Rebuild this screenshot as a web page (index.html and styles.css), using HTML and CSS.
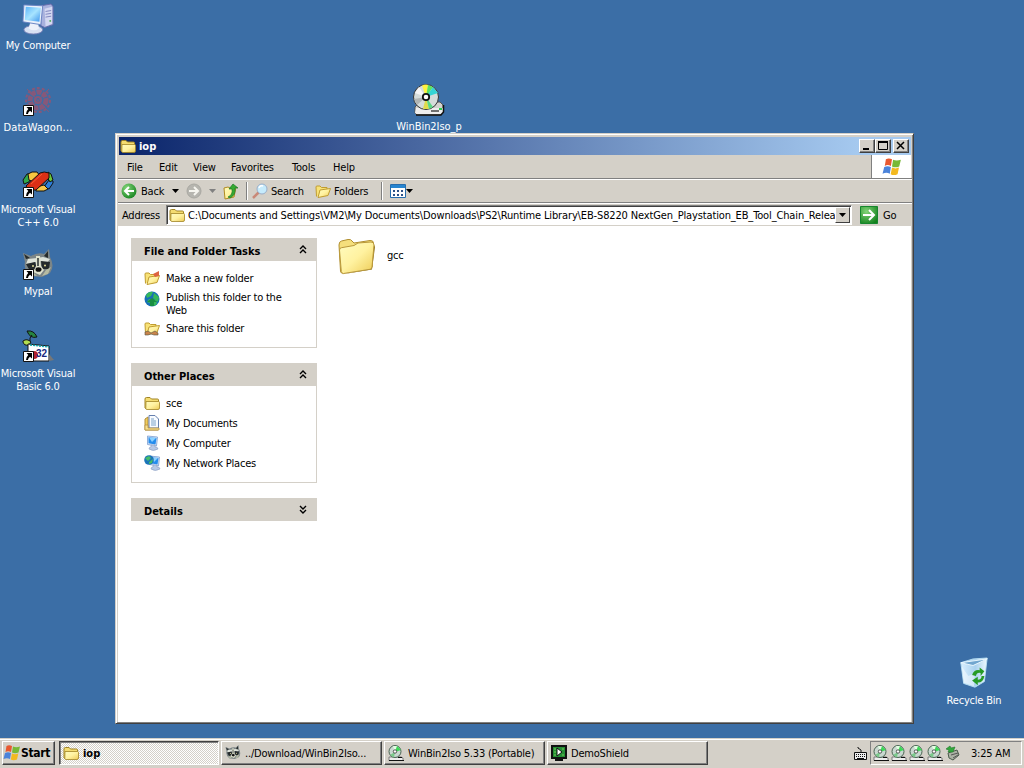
FILE: index.html
```
<!DOCTYPE html>
<html lang="en">
<head>
<meta charset="utf-8">
<title>iop</title>
<link rel="stylesheet" href="styles.css">
</head>
<body>
<svg class="defs" width="0" height="0">
  <defs>
    <linearGradient id="gold" x1="0" y1="0" x2="1" y2="1"><stop offset="0" stop-color="#fffcc0"/><stop offset=".5" stop-color="#fff2a0"/><stop offset="1" stop-color="#edcb55"/></linearGradient>
    <linearGradient id="screen" x1="0" y1="0" x2="1" y2="1"><stop offset="0" stop-color="#5db4fa"/><stop offset=".5" stop-color="#a7e4ff"/><stop offset="1" stop-color="#3d94ec"/></linearGradient>
    <radialGradient id="green" cx=".35" cy=".3" r=".8"><stop offset="0" stop-color="#83d578"/><stop offset="1" stop-color="#12811c"/></radialGradient>
    <linearGradient id="glass" x1="0" y1="0" x2="1" y2="0"><stop offset="0" stop-color="#d9efff"/><stop offset=".55" stop-color="#a9d1ee"/><stop offset="1" stop-color="#eff9fe"/></linearGradient>
  </defs>
  <symbol id="folder" viewBox="0 0 16 16">
    <path d="M1 13V4Q1 2.500 2.500 2.500H6L7.500 4H13.500Q14.500 4 14.500 5V13.500H1.500Z" fill="#f4dc70" stroke="#a18425"/>
    <path d="M2 6.500H14.500Q15.500 6.500 15.500 7.500V13Q15.500 14.500 14 14.500H3Q1.800 14.500 1.800 13.500Z" fill="url(#gold)" stroke="#a18425" stroke-width=".8"/>
  </symbol>
  <symbol id="open-folder" viewBox="0 0 16 16">
    <path d="M1.500 13.500 1 4Q1 3 2 3H5L6.500 4.500H12V7" fill="#f8e277" stroke="#c09c30"/>
    <path d="M5 7 15.500 5.500 13 12.500 3 14.500Z" fill="url(#gold)" stroke="#c09c30"/>
  </symbol>
  <symbol id="big-folder" viewBox="0 0 38 38">
    <path d="M3 36.500 34 31.500 37 9 35 4 31 31Z" fill="#8f701c"/>
    <path d="M1 7Q1 3.500 3.500 3L10 1.500Q13 1 14 3L16 5 32 2.500Q35.500 2 35.500 5.500L34 29 5 35Q2.500 35.500 2.500 33Z" fill="#f5df7c" stroke="#b08e2f"/>
    <path d="M1.500 12Q1.500 10 3.500 9.700L16 7.500 20 5 33 4Q36 4 36 7L34 29Q34 31 32 31.300L5.500 35.500Q3.500 35.500 3.300 33.500Z" fill="url(#gold)" stroke="#b9983a"/>
  </symbol>
  <symbol id="flag" viewBox="0 0 18 18">
    <path d="M3.500 2Q6 .500 9 2L8 8Q5 6.500 2.500 8Z" fill="#e8582f"/><path d="M10 2.500Q13 4 17 2.500L15.500 8.500Q12 10 9 8.500Z" fill="#77b936"/>
    <path d="M2 9Q5 7.500 8 9L7 15Q4 13.500.500 15Z" fill="#4b83da"/><path d="M9 9.500Q12 11 15.300 9.500L14 15.500Q10.500 17 7.800 15.500Z" fill="#f3b91f"/>
  </symbol>
  <symbol id="disc" viewBox="0 0 32 32">
    <path d="M2 23 7 18H27L30 21V29L27 31H4L2 29Z" fill="#d3d3cf" stroke="#555"/><path d="M3 24H30V29L27 30H4L2 29Z" fill="#eee"/><path d="M3 31H28L30.500 28V21" fill="none" stroke="#111" stroke-width="1.500"/><path d="M18 27H26" stroke="#444" stroke-width="1.500"/><path d="M26 24h3v2h-3z" fill="#27cd50"/>
    <circle cx="13" cy="13" r="12.500" fill="#d5dcda" stroke="#333"/>
    <path d="M13 13 9 1.500Q13 0 15 1Z" fill="#fff23e"/><path d="M13 13 15 1 20 3Z" fill="#5de35d"/><path d="M13 13 20 3 25 9Z" fill="#35d4d4"/><path d="M13 13 1 15 4 21Z" fill="#b0b5b4"/><path d="M13 13 10 25 16 25Z" fill="#e0db4c"/><path d="M13 13 16 25 20 23Z" fill="#59d985"/><path d="M13 13 2 9 6 3Z" fill="#f5f5f5"/>
    <circle cx="13" cy="13" r="3.200" fill="#fff" stroke="#111" stroke-width="1.800"/>
  </symbol>
  <symbol id="small-disc" viewBox="0 0 16 16">
    <path d="M1 12H13L15 13V15.500H1Z" fill="#eee" stroke="#666" stroke-width=".8"/><circle cx="7" cy="6.500" r="6" fill="#c9d8d0" stroke="#496452"/>
    <path d="M7 7 5 1H9Z" fill="#e3ffe3"/><path d="M7 7 9 1 13 5Z" fill="#3dd957"/><path d="M7 7 2 10 6 12.500Z" fill="#79c98a"/><circle cx="7" cy="6.500" r="1.700" fill="#fff" stroke="#333" stroke-width=".8"/><path d="M1 15.500H16M10 12.500H14" stroke="#111"/>
  </symbol>
  <symbol id="computer" viewBox="0 0 34 34">
    <path d="M20 3 31 1 33 4V23L24 26 20 24Z" fill="#a9b1dd" stroke="#656aaa"/><path d="M24 6 32 4V22L25 25Z" fill="#d4d8f1"/><path d="M25 9 31 8M25 12 31 11M25 15 31 14" stroke="#7c82bd"/><circle cx="30" cy="19" r="1" fill="#4eae55"/>
    <ellipse cx="12" cy="28.500" rx="10" ry="4.500" fill="#d8e1f3" stroke="#7680b6"/><path d="M9 20H17L18 27Q13 31 7 27Z" fill="#eef1fa"/>
    <path d="M2 2 22 3 20 23 1 20Z" fill="#e9f0fb" stroke="#6681c2"/><path d="M4 4 20 5 18.500 20 3 18Z" fill="url(#screen)"/>
  </symbol>
  <symbol id="pc" viewBox="0 0 16 16">
    <path d="M3.500 1 13.500 2 12.500 11 3.500 9.500Z" fill="#d7e5f7" stroke="#7c9ed2" stroke-width=".8"/><path d="M4.500 2.200 12.500 3 11.500 9.500 4.500 8.300Z" fill="#258ced"/><path d="M5 2.500 12 3 8 7Z" fill="#8bd1ff"/><path d="M7 10H11V12Q14 12 14 14 9 17 5 14 5 12 7 12Z" fill="#b8c9e6" stroke="#8a9cc0" stroke-width=".6"/>
  </symbol>
  <symbol id="shortcut" viewBox="0 0 11 11">
    <path d="M.5.500H10.500V10.500H.5Z" fill="#fff" stroke="#111"/><path d="M3.500 2H9V7.500L7 5.800Q5 7 5 9H3Q3 6 5.300 4Z" fill="#000"/>
  </symbol>
  <symbol id="raccoon" viewBox="0 0 32 32">
    <path d="M1 4 9 7Q16 3 22 5L27 0 28 8Q33 17 28 24L20 28 9 27Q1 20 3 13Z" fill="#7c8587"/><path d="M2 5 8 9 4 10ZM26 2 26 9 22 7Z" fill="#262b2b"/><path d="M6 10 15 9 21 8 28 10 25 14 18 12 10 14 4 15Z" fill="#dde2d9"/><path d="M4 15 13 13 15 20 8 22ZM19 12 28 13 27 20 20 20Z" fill="#242a2c"/><path d="M14 7H18L19 17 22 21 18 26 11 23 14 17Z" fill="#dfe2cd"/><path d="M15 9H17V17H15Z" fill="#555b58"/><circle cx="11" cy="17" r="1" fill="#e2dd9a"/><circle cx="23" cy="16.500" r="1" fill="#e2dd9a"/><ellipse cx="16.500" cy="20.500" rx="3" ry="2.300" fill="#111"/><path d="M24 21 29 18 26 25 20 27ZM6 22 11 23 15 27 9 26Z" fill="#b6bba2"/>
  </symbol>
</svg>

<main class="desktop">
  <div class="shortcut my-computer"><svg class="icon" viewBox="0 0 34 34"><use href="#computer"/></svg><span>My Computer</span></div>
  <div class="shortcut datawagon"><svg class="icon" viewBox="0 0 32 32"><g fill="none" stroke="#a65068" opacity=".7"><circle cx="16" cy="15" r="12" stroke-width="2" stroke-dasharray="3 2"/><circle cx="16" cy="15" r="8" stroke-width="5" stroke-dasharray="5 1"/><path d="M5 4 27 27M27 4 6 26" stroke-width="1"/><circle cx="16" cy="15" r="3" stroke-width="2"/></g><use href="#shortcut" x="1" y="20" width="11" height="11"/></svg><span>DataWagon...</span></div>
  <div class="shortcut visual-c"><svg class="icon" viewBox="0 0 32 32"><path d="M1 13 5 7 10 6 7 15 2 17Z" fill="#30a84a" stroke="#111"/><path d="M6 7 10 5H15L18 9 12 15 7 13Z" fill="#f8c740" stroke="#111"/><path d="M22 20 27 13 31 14V16L27 22Z" fill="#2b7edc" stroke="#111"/><path d="M26 5 29 7 31 13 28 15 25 10Z" fill="#68c639" stroke="#111"/><path d="M14 20 22 18 26 22 22 24H14Z" fill="#f8c849" stroke="#111"/><path d="M4 19 18 6Q22 4 27 6V11L14 23H7Z" fill="#db3016" stroke="#111"/><path d="M9 17 20 7" stroke="#f65d37"/><use href="#shortcut" x="1" y="20" width="11" height="11"/></svg><span>Microsoft Visual<br>C++ 6.0</span></div>
  <div class="shortcut mypal"><svg class="icon" viewBox="0 0 32 32"><use href="#raccoon"/><use href="#shortcut" x="1" y="20" width="11" height="11"/></svg><span>Mypal</span></div>
  <div class="shortcut visual-basic"><svg class="icon" viewBox="0 0 32 32"><path d="M5 0Q12 -1 15 6 8 8 5 0Z" fill="#268340" stroke="#111"/><path d="M1 10Q5 7 9 11L7 14Q2 15 1 11Z" fill="#b3dd50" stroke="#111"/><path d="M8 10Q7 7 10 4" fill="none" stroke="#111"/><path d="M6 13 27 15V30H6Z" fill="#fff" stroke="#111"/><path d="M8 14 27 16" stroke="#12a7ae" stroke-width="1.500" stroke-dasharray="2 1"/><path d="M27 23 32 29 27 30Z" fill="#777"/><circle cx="12" cy="24" r="4" fill="#b3212d"/><text x="14" y="26" class="vb-number">32</text><use href="#shortcut" x="1" y="20" width="11" height="11"/></svg><span>Microsoft Visual<br>Basic 6.0</span></div>
  <div class="shortcut winbin"><svg class="icon" viewBox="0 0 32 32"><use href="#disc"/></svg><span>WinBin2Iso_p</span></div>
  <div class="shortcut recycle"><svg class="icon" viewBox="0 0 34 34"><path d="M3 5 16 1 31 0 28 25 18 31 6 27Z" fill="url(#glass)" stroke="#b9dff2"/><path d="M3 5 16 8 31 1 17 3Z" fill="#71a6cf" stroke="#ecf9ff"/><path d="M4 9 11 19 18 16 17 30 6 26Z" fill="#fff" opacity=".45"/><path d="M15 18Q17 12 23 13V10L28 14 24 19V16Q20 15 19 19ZM28 19Q27 26 21 26V29L15 24 21 20V23Q25 23 25 19Z" fill="#279b25"/></svg><span>Recycle Bin</span></div>

  <section class="window">
    <header class="titlebar"><svg class="i16"><use href="#folder"/></svg><b>iop</b><div class="window-buttons"><i class="caption"><svg viewBox="0 0 14 12"><path d="M3 9H9" stroke="#000" stroke-width="2"/></svg></i><i class="caption"><svg viewBox="0 0 14 12"><path d="M2.500 2H11.500V9.500H2.500Z" fill="none" stroke="#000"/><path d="M2 2H12" stroke="#000" stroke-width="2"/></svg></i><i class="caption close"><svg viewBox="0 0 14 12"><path d="M3 2 10 9M10 2 3 9" stroke="#000" stroke-width="1.500"/></svg></i></div></header>
    <div class="menu-row"><nav class="menu"><span class="file">File</span><span class="edit">Edit</span><span class="view">View</span><span class="favorites">Favorites</span><span class="tools">Tools</span><span>Help</span></nav><div class="brand"><svg width="22" height="20"><use href="#flag"/></svg></div></div>
    <div class="toolbar">
      <svg class="i16 back-icon"><circle cx="8" cy="8" r="7.500" fill="url(#green)"/><path d="M13 8H4M8 4 4 8 8 12" fill="none" stroke="#fff" stroke-width="2"/></svg><span class="back">Back</span><i class="arrow"></i>
      <svg class="i16 forward"><circle cx="8" cy="8" r="7" fill="#b6b5af" stroke="#a9a8a2"/><path d="M3 8H12M8 4 12 8 8 12" fill="none" stroke="#f6f5ef" stroke-width="2"/></svg><i class="arrow muted"></i>
      <svg class="i16 up"><path d="M1 5 5 4 7 5 13 4 11 14 2 16Z" fill="url(#gold)" stroke="#b08b20"/><path d="M5 14Q10 12 9 6H6L10 1 15 5H12Q13 12 7 15Z" fill="#35aa32" stroke="#197727" stroke-width=".7"/></svg>
      <i class="separator"></i>
      <svg class="i16 search"><path d="M7 9 1 15" stroke="#c98978" stroke-width="2.500"/><circle cx="10" cy="6" r="5" fill="#c6ebfc" stroke="#9bafc9"/><path d="M7 5Q8 2 11 3" fill="none" stroke="#fff" stroke-width="1.500"/></svg><span class="search-text">Search</span>
      <svg class="i16"><use href="#open-folder"/></svg><span class="folders">Folders</span><i class="separator second"></i>
      <svg class="i16 views"><path d="M.5 1.500H15.500V14.500H.5Z" fill="#fff" stroke="#276dad"/><path d="M1 2H15V5H1Z" fill="#2785d0"/><path d="M3 7h2v2H3zM7 7h2v2H7zM11 7h2v2h-2zM3 11h2v2H3zM7 11h2v2H7zM11 11h2v2h-2z" fill="#2d5187"/></svg><i class="arrow"></i>
    </div>
    <div class="address-row"><span class="address-label">Address</span><div class="address"><svg class="i16"><use href="#folder"/></svg><span class="path">C:\Documents and Settings\VM2\My Documents\Downloads\PS2\Runtime Library\EB-S8220 NextGen_Playstation_EB_Tool_Chain_Release</span><i class="dropdown"><i class="arrow"></i></i></div><svg class="go-icon" viewBox="0 0 18 18"><path d="M.5.500H17.500V17.500H.5Z" fill="url(#green)" stroke="#16862d"/><path d="M3 9H14M9 4 14 9 9 14" fill="none" stroke="#fff" stroke-width="2"/></svg><span>Go</span></div>
    <div class="explorer">
      <aside class="sidebar">
        <section class="panel tasks"><h2>File and Folder Tasks<svg class="chevron"><path d="M1 4 4 1 7 4M1 8 4 5 7 8"/></svg></h2><ul>
          <li><svg class="i16"><use href="#open-folder"/><path d="M9 4 15 1 15 6 11 7Z" fill="#dd6441"/></svg>Make a new folder</li>
          <li class="two"><svg class="i16"><circle cx="8" cy="8" r="7.500" fill="#1770b6"/><path d="M2 4Q5 0 9 1L7 5 3 7ZM10 2 15 6 14 11 9 7ZM5 8 12 9 13 13 10 15H6V12L3 11Z" fill="#36b95a"/><path d="M8 7 13 11H10V15H6V11H3Z" fill="#188e42"/></svg><span>Publish this folder to the<br>Web</span></li>
          <li><svg class="i16"><use href="#open-folder"/><path d="M1 12 4 11 7 13 11 11 14 13V15H10L7 14 4 15H1Z" fill="#c9844b" stroke="#554" stroke-width=".6"/></svg>Share this folder</li>
        </ul></section>
        <section class="panel places"><h2>Other Places<svg class="chevron"><path d="M1 4 4 1 7 4M1 8 4 5 7 8"/></svg></h2><ul>
          <li><svg class="i16"><use href="#folder"/></svg>sce</li>
          <li><svg class="i16"><path d="M1 4 4 2V14H14V15H1Z" fill="#f0cc5d" stroke="#b28e38"/><path d="M5 .500H11L14.500 4V13H5Z" fill="#f8fbff" stroke="#6680ae"/><path d="M7 4H10M7 6H12M7 8H12M7 10H12" stroke="#7ba3c9"/><path d="M1 10H4V13H15V15H1Z" fill="#f6df8e" stroke="#b18937" stroke-width=".7"/></svg>My Documents</li>
          <li><svg class="i16"><use href="#pc"/></svg>My Computer</li>
          <li><svg class="i16"><use href="#pc" x="2"/><circle cx="5" cy="5" r="4.800" fill="#1c75b8"/><path d="M1 3 5 1 7 3 4 6ZM5 7 9 4 8 8 5 9Z" fill="#45bd68"/></svg>My Network Places</li>
        </ul></section>
        <section class="panel details"><h2>Details<svg class="chevron"><path d="M1 1 4 4 7 1M1 5 4 8 7 5"/></svg></h2></section>
      </aside>
      <div class="files"><svg class="folder-large" viewBox="0 0 38 38"><use href="#big-folder"/></svg><span>gcc</span></div>
    </div>
  </section>
</main>

<footer class="taskbar">
  <div class="start"><svg width="18" height="18"><use href="#flag"/></svg><b>Start</b></div>
  <div class="task active"><svg class="i16"><use href="#folder"/></svg><b>iop</b></div>
  <div class="task download"><svg class="i16"><use href="#raccoon"/></svg><span>../Download/WinBin2Iso...</span></div>
  <div class="task portable"><svg class="i16"><use href="#small-disc"/></svg><span>WinBin2Iso 5.33 (Portable)</span></div>
  <div class="task demo"><svg class="i16"><path d="M1 1H15V13H1Z" fill="#258d35" stroke="#111" stroke-width="2"/><path d="M6 3 11 7 6 11Z" fill="#fff" stroke="#111"/><path d="M3 4H5M3 7H5M3 10H5M11 4H13M11 10H13" stroke="#72ce57"/><path d="M4 15H12" stroke="#111" stroke-width="2"/></svg><span>DemoShield</span></div>
  <svg class="keyboard" viewBox="0 0 13 15"><path d="M.5 6.500H12.500V13.500H.5ZM7 6V4L4 2V1" fill="#eee" stroke="#111"/><path d="M2 8.500H11M2 10.500H11" stroke="#111" stroke-dasharray="1 1"/><path d="M3 12.500H10" stroke="#111"/></svg>
  <div class="tray"><svg><use href="#small-disc"/></svg><svg><use href="#small-disc"/></svg><svg><use href="#small-disc"/></svg><svg><use href="#small-disc"/></svg><svg viewBox="0 0 16 16"><path d="M3 8 12 5 14 10 8 15 4 13Z" fill="#abb2a4" stroke="#4b5b4b"/><path d="M6 10 13 8M8 13 13 10" stroke="#555"/><path d="M1 4 5 1 6 3 10 2 8 7 3 7 4 5Z" fill="#32a93b" stroke="#20772b" stroke-width=".6"/></svg><span>3:25 AM</span></div>
</footer>
</body>
</html>
```
FILE: styles.css
```
* { box-sizing: border-box; }
body { margin: 0; width: 1024px; height: 768px; overflow: hidden; background: #3b6ea6; color: #000; font: 11px/13px "DejaVu Sans Condensed", "DejaVu Sans", sans-serif; font-stretch: condensed; letter-spacing: -.2px; display: flex; flex-direction: column; white-space: nowrap; }
svg { display: block; flex: none; overflow: visible; }
i { font-style: normal; flex: none; }
b, h2 { font-weight: bold; letter-spacing: -.03px; }
.defs { position: absolute; }
.i16 { width: 16px; height: 16px; }
.desktop { position: relative; height: 738px; flex: none; }
.shortcut { position: absolute; width: 84px; color: #fff; text-align: center; display: flex; flex-direction: column; align-items: center; gap: 4px; }
.shortcut .icon { width: 32px; height: 32px; }
.my-computer { left: -4px; top: 3px; }
.datawagon { left: -4px; top: 85px; letter-spacing: .2px; }
.visual-c { left: -4px; top: 167px; }
.mypal { left: -4px; top: 249px; }
.visual-basic { left: -4px; top: 331px; }
.winbin { left: 387px; top: 84px; letter-spacing: -.05px; }
.recycle { left: 932px; top: 658px; }
.vb-number { font: bold 10px "Liberation Sans"; letter-spacing: 0; fill: #18277e; }
.window { position: absolute; left: 115px; top: 133px; width: 799px; height: 591px; padding: 2px 1px 1px 2px; background: #d4d0c8; border: 1px solid #d4d0c8; border-right-color: #404040; border-bottom-color: #404040; box-shadow: inset 1px 1px #fff, inset -1px -1px #808080; display: flex; flex-direction: column; }
.titlebar { margin: 1px 1px 0 1px; height: 18px; flex: none; background: linear-gradient(90deg, #0a246a, #a6caf0 94%); display: flex; align-items: center; color: #fff; padding: 0 2px 0 1px; gap: 3px; }
.window-buttons { display: flex; margin-left: auto; }
.caption { width: 16px; height: 14px; background: #d4d0c8; border: 1px solid #fff; border-right-color: #404040; border-bottom-color: #404040; box-shadow: inset -1px -1px #808080; }
.caption svg { width: 14px; height: 12px; }
.close { margin-left: 2px; }
.menu-row { height: 24px; flex: none; display: flex; border-bottom: 1px solid #808080; }
.menu { flex: 1; display: flex; align-items: center; padding: 1px 0 0 9px; }
.file { width: 32px; }
.edit { width: 34px; }
.view { width: 38px; }
.favorites { width: 61px; }
.tools { width: 41px; }
.brand { width: 40px; background: #fff; border-left: 1px solid #808080; margin-right: 1px; display: grid; place-items: center; }
.toolbar { height: 24px; flex: none; border-top: 1px solid #fff; border-bottom: 1px solid #808080; padding-left: 4px; display: flex; align-items: center; }
.back-icon { margin-left: -1px; margin-right: 1px; }
.arrow { width: 7px; height: 4px; margin: 0 -1px; background: #000; clip-path: polygon(0 0, 100% 0, 50% 100%); }
.muted { background: #808080; }
.back { width: 32px; padding-left: 3px; margin-right: 3px; }
.forward { margin-left: 8px; margin-right: 8px; }
.up { margin-left: 8px; }
.separator { width: 2px; height: 18px; border-left: 1px solid #808080; border-right: 1px solid #fff; margin-left: 7px; margin-right: 4px; }
.search-text { width: 47px; padding-left: 3px; }
.folders { width: 46px; padding-left: 3px; }
.second { margin-left: 4px; margin-right: 7px; }
.views { margin-right: 1px; }
.address-row { height: 23px; flex: none; border-top: 1px solid #fff; display: flex; align-items: center; padding-left: 4px; }
.address-label { width: 44px; }
.address { width: 686px; height: 20px; background: #fff; border: 1px solid #808080; border-right-color: #fff; border-bottom-color: #fff; box-shadow: inset 1px 1px #404040; display: flex; align-items: center; padding: 1px 1px 1px 2px; margin-right: 8px; }
.path { flex: 1; overflow: hidden; margin-left: 3px; padding-top: 1px; letter-spacing: -.14px; }
.dropdown { width: 15px; height: 16px; background: #d4d0c8; border: 1px solid #fff; border-right-color: #404040; border-bottom-color: #404040; display: grid; place-items: center; }
.dropdown .arrow { margin: 0; }
.go-icon { width: 18px; height: 18px; margin-right: 5px; }
.explorer { flex: 1; background: #fff; display: flex; margin-right: 1px; }
.sidebar { width: 199px; padding: 12px 0 0 13px; display: flex; flex-direction: column; gap: 15px; }
.panel { border: 1px solid #d4d0c8; }
.tasks { height: 110px; }
.places { height: 120px; }
.details { height: 23px; }
h2 { margin: -1px; height: 23px; padding: 3px 10px 0 13px; background: #d4d0c8; font-size: 11px; line-height: 13px; display: flex; align-items: center; justify-content: space-between; }
.chevron { width: 8px; height: 10px; fill: none; stroke: #000; stroke-width: 1.400; position: relative; top: -1px; }
ul { list-style: none; margin: 0; padding: 8px 0 0 12px; }
li { height: 20px; display: flex; align-items: center; gap: 6px; }
.two { height: 30px; align-items: flex-start; padding-top: 3px; }
.files { padding: 12px 0 0 21px; height: 50px; display: flex; gap: 11px; }
.folder-large { width: 38px; height: 38px; }
.files span { padding-top: 11px; }
.taskbar { height: 30px; flex: none; background: #d4d0c8; border-top: 1px solid #d4d0c8; box-shadow: inset 0 1px #fff; padding: 2px 2px 2px; display: flex; align-items: flex-start; }
.start, .task { height: 24px; border: 1px solid #fff; border-right-color: #404040; border-bottom-color: #404040; box-shadow: inset -1px -1px #808080; display: flex; align-items: center; }
.start { width: 53px; padding-left: 0; gap: 0; margin-right: 4px; font-size: 12px; letter-spacing: 0; }
.start b { letter-spacing: -.3px; }
.task { width: 161px; margin-right: 2px; padding-left: 3px; gap: 4px; }
.active { width: 160px; background: repeating-conic-gradient(#fff 0 25%, #d4d0c8 0 50%) 0 0 / 2px 2px; border-color: #404040 #fff #fff #404040; box-shadow: inset 1px 1px #808080; }
.active b { padding-top: 1px; }
.keyboard { width: 13px; height: 15px; margin: 5px 3px 0 auto; }
.tray { width: 152px; height: 24px; border: 1px solid #808080; border-right-color: #fff; border-bottom-color: #fff; display: flex; align-items: center; gap: 2px; padding-left: 2px; }
.tray svg { width: 16px; height: 16px; }
.tray span { margin-left: 8px; padding-top: 1px; }
```
